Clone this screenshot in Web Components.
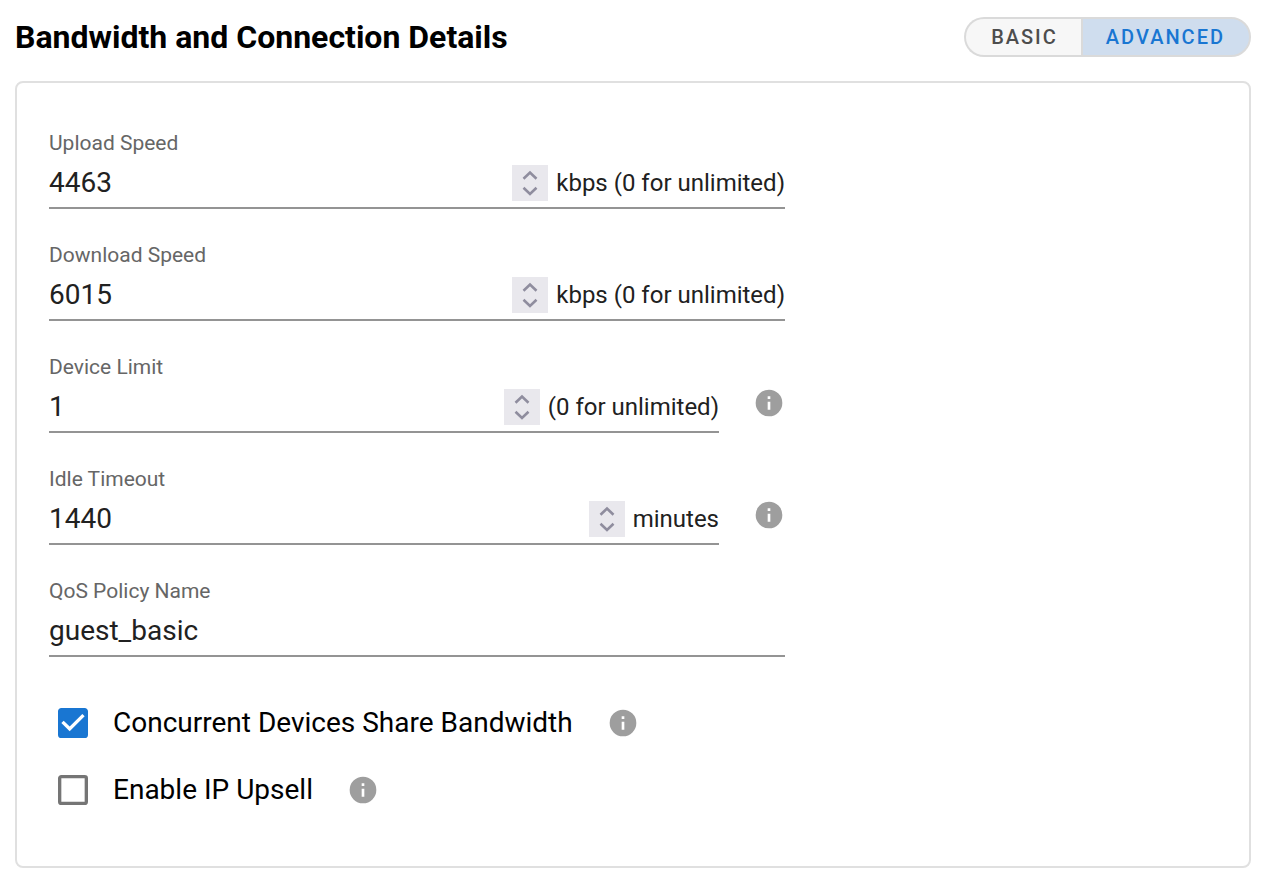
<!DOCTYPE html>
<html lang="en">
<head>
<meta charset="utf-8">
<meta name="viewport" content="width=device-width, initial-scale=1">
<title>Bandwidth and Connection Details</title>
<style>
    body {
        margin: 0;
        background: #fff;
        color: #000;
        font-family: Roboto, "Liberation Sans", sans-serif;
    }
</style>
</head>
<body>
<settings-panel heading="Bandwidth and Connection Details">
    <mode-toggle slot="actions" value="advanced"></mode-toggle>

    <number-field label="Upload Speed" value="4463">kbps (0 for unlimited)</number-field>
    <number-field label="Download Speed" value="6015">kbps (0 for unlimited)</number-field>
    <number-field label="Device Limit" value="1">
        (0 for unlimited)
        <info-button slot="info" label="About device limit"></info-button>
    </number-field>
    <number-field label="Idle Timeout" value="1440">
        minutes
        <info-button slot="info" label="About idle timeout"></info-button>
    </number-field>
    <text-field label="QoS Policy Name" value="guest_basic"></text-field>

    <check-field slot="options" checked>
        Concurrent Devices Share Bandwidth
        <info-button slot="info" label="About sharing bandwidth"></info-button>
    </check-field>
    <check-field slot="options">
        Enable IP Upsell
        <info-button slot="info" label="About IP upsell"></info-button>
    </check-field>
</settings-panel>

<script>
// shared by text-field and number-field
const fieldStyles = `
    :host {
        display: flex;
        align-items: flex-end;
        gap: 34px;
    }
    .field {
        flex: 1;
        min-width: 0;
        border-bottom: 2px solid #949494;
    }
    label {
        display: block;
        font-size: 21px;
        line-height: 28px;
        color: #666;
    }
    .control {
        display: flex;
        align-items: center;
        gap: 8px;
        height: 36px;
        padding: 8px 0 6px;
        color: #212121;
    }
    input {
        box-sizing: border-box;
        flex: 1;
        min-width: 0;
        height: 36px;
        margin: 0;
        padding: 0 0 2px;
        border: 0;
        outline: 0;
        background: none;
        color: inherit;
        font: inherit;
        font-size: 28px;
    }
`

customElements.define(
    'settings-panel',
    class extends HTMLElement {
        constructor() {
            super()
            this.attachShadow({ mode: 'open' })
        }

        connectedCallback() {
            this.shadowRoot.innerHTML = `
                <style>
                    :host {
                        display: block;
                        padding: 16px 23px 24px 15px;
                    }
                    header {
                        display: flex;
                        align-items: center;
                        justify-content: space-between;
                        margin-bottom: 23px;
                    }
                    h1 {
                        margin: 0;
                        font-size: 32px;
                        line-height: 42px;
                        font-weight: 700;
                    }
                    section {
                        padding: 46px 32px 56px;
                        border: 2px solid #e0e0e0;
                        border-radius: 8px;
                    }
                    .fields {
                        display: grid;
                        gap: 32px;
                        max-width: 736px;
                    }
                    .options {
                        display: grid;
                        gap: 27px;
                        margin-top: 46px;
                    }
                </style>
                <header>
                    <h1>${this.getAttribute('heading')}</h1>
                    <slot name="actions"></slot>
                </header>
                <section>
                    <div class="fields"><slot></slot></div>
                    <div class="options"><slot name="options"></slot></div>
                </section>
            `
        }
    }
)

customElements.define(
    'mode-toggle',
    class extends HTMLElement {
        constructor() {
            super()
            this.attachShadow({ mode: 'open' })
        }

        static get observedAttributes() {
            return ['value']
        }
        get value() {
            return this.getAttribute('value') || 'basic'
        }
        set value(val) {
            this.setAttribute('value', val)
        }

        render() {
            this.shadowRoot.innerHTML = `
                <style>
                    :host {
                        display: flex;
                    }
                    button {
                        height: 40px;
                        margin: 0;
                        padding: 0 24px 0 23px;
                        border: 2px solid #dadada;
                        background: #f7f7f7;
                        color: #4d4d4d;
                        font: inherit;
                        font-size: 20px;
                        font-weight: 500;
                        letter-spacing: 2px;
                        cursor: pointer;
                    }
                    button:first-of-type {
                        padding: 0 23px 0 25px;
                        border-right: 0;
                        border-radius: 20px 0 0 20px;
                    }
                    button:last-of-type {
                        border-radius: 0 20px 20px 0;
                    }
                    button[aria-pressed="true"] {
                        background: #cfddee;
                        color: #1976d2;
                    }
                </style>
                <button type="button" value="basic" aria-pressed="${this.value === 'basic'}">BASIC</button>
                <button type="button" value="advanced" aria-pressed="${this.value === 'advanced'}">ADVANCED</button>
            `
        }

        connectedCallback() {
            this.render()
            this.shadowRoot.addEventListener('click', e => {
                const button = e.target.closest('button')
                if (button) this.value = button.value
            })
        }
        attributeChangedCallback() {
            this.render()
        }
    }
)

customElements.define(
    'info-button',
    class extends HTMLElement {
        constructor() {
            super()
            this.attachShadow({ mode: 'open' })
        }

        connectedCallback() {
            this.shadowRoot.innerHTML = `
                <style>
                    :host {
                        display: block;
                    }
                    button {
                        display: block;
                        margin: 0;
                        padding: 0;
                        border: 0;
                        background: none;
                        color: #9e9e9e;
                        cursor: pointer;
                    }
                    svg {
                        display: block;
                        width: 32px;
                        height: 32px;
                    }
                </style>
                <button type="button" aria-label="${this.getAttribute('label')}">
                    <svg viewBox="0 0 24 24" fill="currentColor" aria-hidden="true">
                        <path d="M13 9h-2V7h2m0 10h-2v-6h2m-1-9A10 10 0 0 0 2 12a10 10 0 0 0 10 10 10 10 0 0 0 10-10A10 10 0 0 0 12 2z"/>
                    </svg>
                </button>
            `
        }
    }
)

customElements.define(
    'text-field',
    class extends HTMLElement {
        constructor() {
            super()
            this.attachShadow({ mode: 'open' })
        }

        connectedCallback() {
            this.shadowRoot.innerHTML = `
                <style>${fieldStyles}</style>
                <div class="field">
                    <label for="input">${this.getAttribute('label')}</label>
                    <div class="control">
                        <input id="input" type="text" spellcheck="false" value="${this.getAttribute('value')}">
                    </div>
                </div>
            `
        }
    }
)

customElements.define(
    'number-field',
    class extends HTMLElement {
        constructor() {
            super()
            this.attachShadow({ mode: 'open' })
        }

        connectedCallback() {
            this.shadowRoot.innerHTML = `
                <style>
                    ${fieldStyles}
                    input {
                        appearance: textfield;
                    }
                    input::-webkit-inner-spin-button {
                        appearance: none;
                        margin: 0;
                    }
                    .stepper {
                        display: grid;
                        width: 36px;
                        height: 36px;
                        background: #e9e8ed;
                    }
                    .stepper button {
                        display: grid;
                        place-items: center;
                        height: 18px;
                        margin: 0;
                        padding: 0;
                        border: 0;
                        background: none;
                        color: #8f8d9e;
                    }
                    .stepper svg {
                        display: block;
                        width: 36px;
                        height: 18px;
                    }
                    .suffix {
                        font-size: 24px;
                        line-height: 36px;
                        white-space: nowrap;
                    }
                    ::slotted([slot="info"]) {
                        margin-bottom: 14px;
                    }
                </style>
                <div class="field">
                    <label for="input">${this.getAttribute('label')}</label>
                    <div class="control">
                        <input id="input" type="number" min="0" value="${this.getAttribute('value')}">
                        <span class="stepper">
                            <button type="button" data-step="up" aria-label="Increase">
                                <svg viewBox="0 0 36 18" fill="none" stroke="currentColor" stroke-width="2.6"><path d="M11.5 13.7 18 7.5l6.5 6.2"/></svg>
                            </button>
                            <button type="button" data-step="down" aria-label="Decrease">
                                <svg viewBox="0 0 36 18" fill="none" stroke="currentColor" stroke-width="2.6"><path d="M11.5 4.8 18 11l6.5-6.2"/></svg>
                            </button>
                        </span>
                        <span class="suffix"><slot></slot></span>
                    </div>
                </div>
                <slot name="info"></slot>
            `
            const input = this.shadowRoot.querySelector('input')
            this.shadowRoot.querySelector('.stepper').addEventListener('click', e => {
                const button = e.target.closest('button')
                if (!button) return
                button.dataset.step === 'up' ? input.stepUp() : input.stepDown()
            })
        }
    }
)

customElements.define(
    'check-field',
    class extends HTMLElement {
        constructor() {
            super()
            this.attachShadow({ mode: 'open' })
        }

        connectedCallback() {
            this.shadowRoot.innerHTML = `
                <style>
                    :host {
                        display: flex;
                        align-items: center;
                        gap: 34px;
                        padding-left: 4px;
                    }
                    label {
                        display: flex;
                        align-items: center;
                        gap: 20px;
                        font-size: 28px;
                        line-height: 40px;
                        cursor: pointer;
                    }
                    .box {
                        display: grid;
                        width: 40px;
                        height: 40px;
                    }
                    .box > * {
                        grid-area: 1 / 1;
                        width: 40px;
                        height: 40px;
                        margin: 0;
                    }
                    input {
                        appearance: none;
                    }
                    svg {
                        pointer-events: none;
                    }
                    .on {
                        display: none;
                        fill: #1976d2;
                    }
                    .off {
                        fill: #757575;
                    }
                    input:checked ~ .on {
                        display: block;
                    }
                    input:checked ~ .off {
                        display: none;
                    }
                </style>
                <label>
                    <span class="box">
                        <input type="checkbox" ${this.hasAttribute('checked') ? 'checked' : ''}>
                        <svg class="on" viewBox="0 0 24 24" aria-hidden="true">
                            <path d="M10 17l-5-5 1.41-1.42L10 14.17l7.59-7.59L19 8m0-5H5c-1.11 0-2 .89-2 2v14a2 2 0 0 0 2 2h14a2 2 0 0 0 2-2V5c0-1.11-.9-2-2-2z"/>
                        </svg>
                        <svg class="off" viewBox="0 0 24 24" aria-hidden="true">
                            <path d="M19 3H5c-1.11 0-2 .89-2 2v14a2 2 0 0 0 2 2h14a2 2 0 0 0 2-2V5a2 2 0 0 0-2-2m0 2v14H5V5h14z"/>
                        </svg>
                    </span>
                    <span><slot></slot></span>
                </label>
                <slot name="info"></slot>
            `
        }
    }
)
</script>
</body>
</html>
